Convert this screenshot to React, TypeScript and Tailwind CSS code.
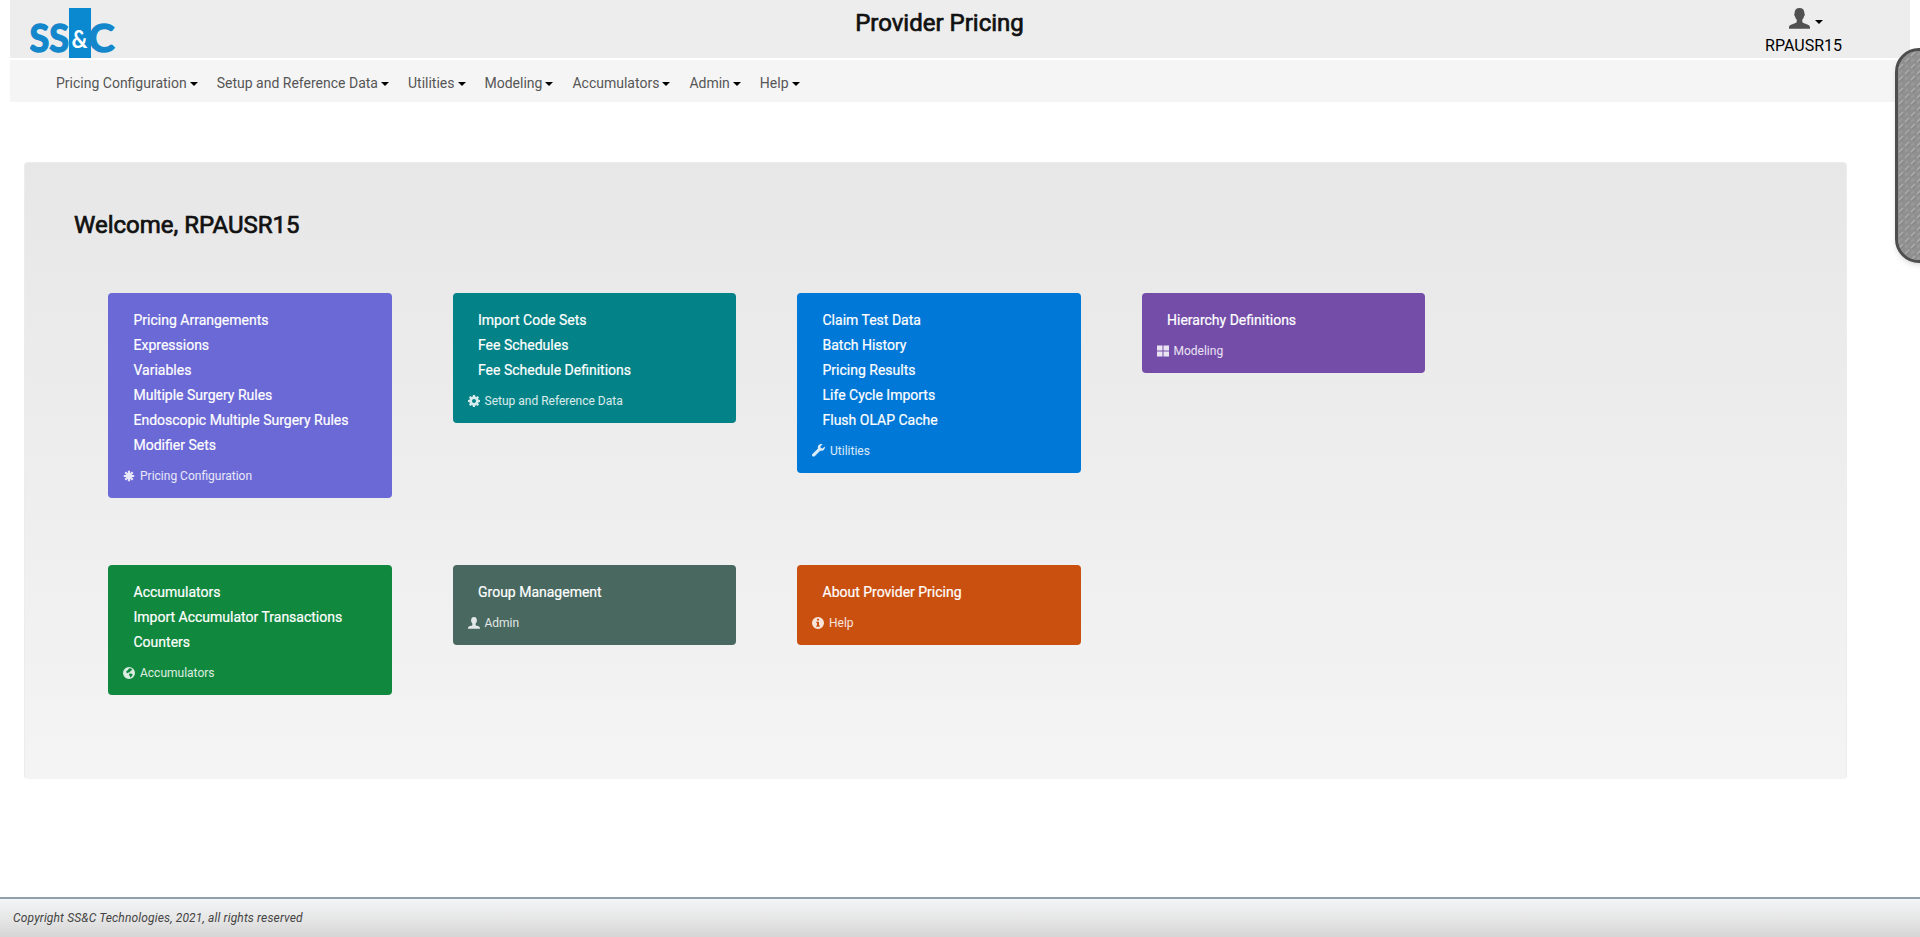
import type { ReactNode } from "react";

function Glyph({ size = 12, children }: { size?: number; children: ReactNode }) {
  return (
    <svg width={size} height={size} viewBox="0 0 12 12" fill="currentColor" className="shrink-0">
      {children}
    </svg>
  );
}

const personPath =
  "M6 0C4.2 0 3.2 1.1 3.2 2.9c0 .4-.3.6-.2 1.1.1.5.4.6.5 1 .2.8.5 1.200.9 1.600v1.100c0 .6-.5.8-1.300 1.100C1.600 9.300 0 9.700 0 11v.8h12V11c0-1.300-1.600-1.700-3.100-2.200C8.100 8.500 7.600 8.300 7.600 7.700V6.600c.4-.4.7-.8.9-1.600.1-.4.4-.5.5-1 .1-.5-.2-.7-.2-1.100C8.800 1.100 7.800 0 6 0z";

const AsteriskIcon = () => (
  <Glyph>
    <path d="M6 .8v10.400M.8 6h10.400M2.300 2.300l7.400 7.400M9.700 2.300 2.300 9.700" stroke="currentColor" strokeWidth="2.200" fill="none" />
  </Glyph>
);
const CogIcon = () => (
  <Glyph>
    <path
      fillRule="evenodd"
      d="M5 0h2l.3 1.500 1 .4L9.600 1 11 2.400l-.9 1.300.4 1L12 5v2l-1.500.3-.4 1 .9 1.300L9.600 11l-1.300-.9-1 .4L7 12H5l-.3-1.500-1-.4-1.300.9L1 9.600l.9-1.300-.4-1L0 7V5l1.500-.3.4-1L1 2.400 2.400 1l1.300.9 1-.4zM6 4a2 2 0 1 0 0 4 2 2 0 0 0 0-4z"
    />
  </Glyph>
);
const WrenchIcon = () => (
  <Glyph size={13}>
    <path d="M11.700 2.200 9.700 4.200 8.100 3.700 7.700 2.200 9.700.2C8.200-.2 6.700.3 5.900 1.400c-.6.8-.7 1.800-.4 2.700L.4 9.200c-.6.6-.6 1.500 0 2 .6.6 1.500.6 2.100 0l5.100-5c1.100.3 2.300.1 3.200-.7 1-.9 1.300-2.200.9-3.300z" />
  </Glyph>
);
const WindowsIcon = () => (
  <Glyph>
    <path d="M0 .5h5.500v5H0zM6.500.5H12v5H6.500zM0 6.500h5.500v5H0zM6.500 6.500H12v5H6.500z" />
  </Glyph>
);
const GlobeIcon = () => (
  <Glyph>
    <path
      fillRule="evenodd"
      d="M6 0a6 6 0 1 0 0 12A6 6 0 0 0 6 0zM6.300 1.300 8.300 1.600 9.300 2.600 8.300 2.900 8.500 3.900 7.200 4.300 6.500 5.400 5.200 5.500 4.700 6.300 3.300 5.600 3.300 4.300 4.700 3.300 5.300 2.200zM6.300 6.800 8 6.600 9.600 7.300 9.300 8.600 7.900 10.200 6.900 10.300 6.900 8.900 5.900 8z"
    />
  </Glyph>
);
const PersonIcon = ({ size = 12 }: { size?: number }) => (
  <Glyph size={size}>
    <path d={personPath} />
  </Glyph>
);
const InfoIcon = () => (
  <Glyph>
    <path fillRule="evenodd" d="M6 0a6 6 0 1 0 0 12A6 6 0 0 0 6 0zM5 1.800h2v1.700H5zM4.200 4.700H7v3.800h.8v1.200H4.200V8.500H5V5.900h-.8z" />
  </Glyph>
);

const Caret = () => (
  <svg width="8" height="4" viewBox="0 0 8 4" className="shrink-0">
    <path d="M0 0h8L4 4z" fill="#000" />
  </svg>
);

const Logo = () => (
  <svg width="88" height="50" viewBox="0 0 88 50" className="block">
    <rect x="39" width="22" height="50" fill="#0a89d0" />
    <g fontFamily="Lato, sans-serif" fontWeight="700">
      <text x="-.5" y="43.500" fontSize="38" fill="#1487cc" textLength="39.500" lengthAdjust="spacingAndGlyphs" stroke="#1487cc" strokeWidth="1.500">
        SS
      </text>
      <text x="41.500" y="39.500" fontSize="24" fill="#fff" textLength="16" lengthAdjust="spacingAndGlyphs">
        &amp;
      </text>
      <text x="58.500" y="43.500" fontSize="38" fill="#1487cc" textLength="26" lengthAdjust="spacingAndGlyphs" stroke="#1487cc" strokeWidth="1.500">
        C
      </text>
    </g>
  </svg>
);

const Grip = () => (
  <svg width="100%" height="100%" className="block">
    <defs>
      <pattern id="grip" width="12" height="12" patternUnits="userSpaceOnUse">
        <rect width="12" height="12" fill="#909090" />
        <path d="M1 5 5 1M7 11l4-4" stroke="#adadad" strokeWidth="1.300" />
        <path d="M2.500 6 6 2.500M8.500 12 12 8.500" stroke="#808080" strokeWidth="1" />
        <path d="M7 4.500 10 2M1 10.500 4 8" stroke="#9f9f9f" strokeWidth="1.200" />
      </pattern>
    </defs>
    <rect width="100%" height="100%" fill="url(#grip)" />
  </svg>
);

const menus = ["Pricing Configuration", "Setup and Reference Data", "Utilities", "Modeling", "Accumulators", "Admin", "Help"];

const cards: { title: string; icon: ReactNode; color: string; items: string[] }[] = [
  {
    title: "Pricing Configuration",
    icon: <AsteriskIcon />,
    color: "bg-[#6b69d6]",
    items: ["Pricing Arrangements", "Expressions", "Variables", "Multiple Surgery Rules", "Endoscopic Multiple Surgery Rules", "Modifier Sets"],
  },
  { title: "Setup and Reference Data", icon: <CogIcon />, color: "bg-[#038387]", items: ["Import Code Sets", "Fee Schedules", "Fee Schedule Definitions"] },
  {
    title: "Utilities",
    icon: <WrenchIcon />,
    color: "bg-[#0078d7]",
    items: ["Claim Test Data", "Batch History", "Pricing Results", "Life Cycle Imports", "Flush OLAP Cache"],
  },
  { title: "Modeling", icon: <WindowsIcon />, color: "bg-[#744da9]", items: ["Hierarchy Definitions"] },
  { title: "Accumulators", icon: <GlobeIcon />, color: "bg-[#10893e]", items: ["Accumulators", "Import Accumulator Transactions", "Counters"] },
  { title: "Admin", icon: <PersonIcon />, color: "bg-[#486860]", items: ["Group Management"] },
  { title: "Help", icon: <InfoIcon />, color: "bg-[#ca5010]", items: ["About Provider Pricing"] },
];

export default function App() {
  return (
    <div className="relative flex h-[937px] w-full flex-col overflow-hidden bg-white font-['Roboto',sans-serif] text-black">
      <header className="mx-[10px] grid h-[58px] shrink-0 grid-cols-[1fr_auto_1fr] bg-[#ededed]">
        <div className="pl-[20px] pt-2">
          <Logo />
        </div>
        <h1 className="mr-[41px] pt-[7px] text-2xl leading-8 font-normal text-[#111] [-webkit-text-stroke:0.7px_#111]">Provider Pricing</h1>
        <div className="flex flex-col items-center justify-self-end pt-[8px] pr-[68px]">
          <div className="ml-[4px] flex items-center gap-[5px] text-[#505050]">
            <PersonIcon size={21} />
            <div className="pt-[6px]">
              <Caret />
            </div>
          </div>
          <span className="mt-[5px] h-6 text-base leading-6">RPAUSR15</span>
        </div>
      </header>

      <nav className="mx-[10px] mt-[2px] flex h-[42px] shrink-0 items-center gap-[19px] bg-[#f5f5f5] pt-[4px] pl-[46px] text-sm text-[#555]">
        {menus.map((m) => (
          <a key={m} className="flex items-center gap-[3px] whitespace-nowrap">
            {m}
            <span className="pt-px">
              <Caret />
            </span>
          </a>
        ))}
      </nav>

      <main className="mt-[60px] ml-6 h-[617px] w-[1823px] shrink-0 rounded-[4px] border border-[#ececec] border-b-[#f5f5f5] bg-linear-to-b from-[#e7e7e7] to-[#f4f4f4] pl-[49px]">
        <h2 className="pt-[46px] text-2xl leading-8 font-normal text-[#111] [-webkit-text-stroke:0.7px_#111]">Welcome, RPAUSR15</h2>
        <div className="mt-[52px] ml-[34px] grid w-[1317px] grid-cols-4 grid-rows-[272px_auto] items-start gap-x-[61px]">
          {cards.map((c) => (
            <section key={c.title} className={`rounded-[4px] pt-[15px] pb-[13px] ${c.color}`}>
              <ul className="pl-[25.5px] text-sm leading-[25px] font-normal text-white [-webkit-text-stroke:0.2px_#fff]">
                {c.items.map((i) => (
                  <li key={i}>{i}</li>
                ))}
              </ul>
              <div className="mt-[8px] flex h-[19px] items-center gap-[5px] pl-[15px] text-xs text-white/85">
                {c.icon}
                {c.title}
              </div>
            </section>
          ))}
        </div>
      </main>

      <footer className="mt-auto h-10 shrink-0 border-t-2 border-[#90a0ac] bg-linear-to-b from-[#f2f5f7] via-[#e7e7e7] to-[#d5d5d5] pl-[13px] text-xs leading-[39px] tracking-[0.15px] text-[#444] italic">
        Copyright SS&amp;C Technologies, 2021, all rights reserved
      </footer>

      <div className="absolute top-[48px] right-[-30px] h-[215px] w-[55px] overflow-hidden rounded-[24px] border-[3px] border-[#4d4d4d] bg-[#909090] shadow-md">
        <Grip />
      </div>
    </div>
  );
}
